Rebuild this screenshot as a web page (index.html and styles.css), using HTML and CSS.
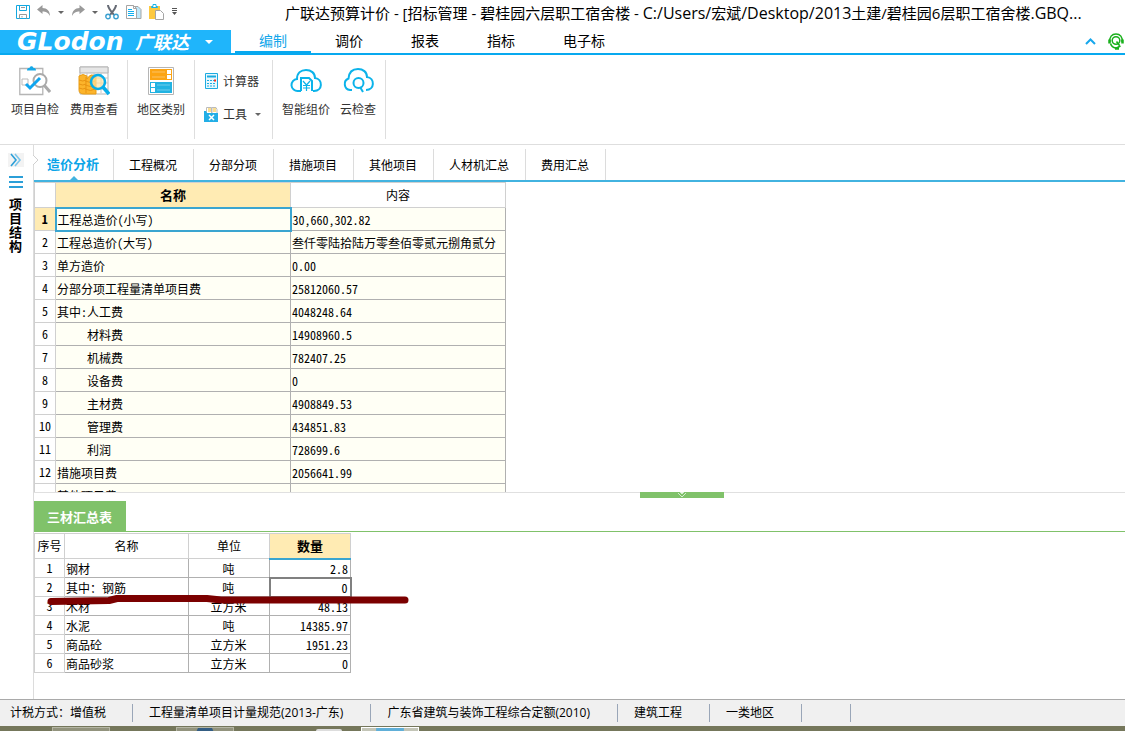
FILE: index.html
```html
<!DOCTYPE html>
<html lang="zh-CN">
<head>
<meta charset="utf-8">
<title>广联达预算计价</title>
<link rel="stylesheet" href="styles.css">
</head>
<body>
<div class="app">
  <header class="titlebar">
    <div class="quick">
      <button class="q" aria-label="保存"><svg width="14" height="14" viewBox="0 0 14 14" fill="none" stroke="#14a8e0"><path d="M.5.5h13v13H.5z"/><path d="M3.500 .5v5h7v-5" /><path d="M5 2.500h4" stroke="#999"/><path d="M3.500 13.500v-4h7v4M6 11v1.500" stroke="#999"/></svg></button>
      <button class="q" aria-label="撤销"><svg width="14" height="14" viewBox="0 0 14 14" fill="#9a9a9a"><path d="M0 4.500 5.500 0v3C10 3 13 6 13 11c-2-3.500-4-4.500-7.500-4.500V9z"/></svg></button>
      <i class="caret"></i>
      <button class="q" aria-label="重做"><svg width="14" height="14" viewBox="0 0 14 14" fill="#9a9a9a"><path d="M14 4.500 8.500 0v3C4 3 1 6 1 11c2-3.500 4-4.500 7.500-4.500V9z"/></svg></button>
      <i class="caret"></i>
      <button class="q" aria-label="剪切"><svg width="14" height="16" viewBox="0 0 14 16" fill="none"><path d="M3 1c0 3 2 5 6 10M11 1c0 3-2 5-6 10" stroke="#666b75" stroke-width="2"/><circle cx="3" cy="12.500" r="2.200" stroke="#3a9fd0" stroke-width="1.400"/><circle cx="11" cy="12.500" r="2.200" stroke="#3a9fd0" stroke-width="1.400"/></svg></button>
      <button class="q" aria-label="复制"><svg width="16" height="16" viewBox="0 0 16 16" fill="#fff" stroke="#a5a5a5"><path d="M8 2.500h4l3 3v9H8z" fill="#bfe8fb"/><path d="M.5 1.500h7l3 3v10H.5z"/><path d="M7.500 1.500v3h3" fill="none"/><path d="M2 5.500h4M2 7.500h6M2 9.500h6M2 11.500h6" stroke="#12b0f0"/></svg></button>
      <button class="q" aria-label="粘贴"><svg width="16" height="16" viewBox="0 0 16 16"><path d="M0 2h11v13H0z" fill="#fdc940"/><path d="M2.500 3.500v-1h1.500v-2h3v2h1.500v1z" fill="#fff" stroke="#18b3e8"/><path d="M6.500 6.500h5l3 3v6h-8z" fill="#fff" stroke="#a5a5a5"/></svg></button>
      <button class="q" aria-label="自定义"><svg width="5" height="8" viewBox="0 0 5 8" fill="#555"><path d="M0 0h5v1H0zM0 2h5v1H0zM0 4h5L2.500 7z"/></svg></button>
    </div>
    <h1 class="title">广联达预算计价 - [招标管理 - 碧桂园六层职工宿舍楼 - <span class="path">C:/Users/</span>宏斌<span class="path">/Desktop/2013</span>土建/碧桂园6层职工宿舍楼<span class="path">.GBQ...</span></h1>
  </header>

  <nav class="menubar">
    <button class="brand"><span class="brand-latin">GLodon</span><span class="brand-cn">广联达</span><i class="caret light"></i></button>
    <div class="menus">
      <button class="menu on">编制</button><button class="menu">调价</button><button class="menu">报表</button><button class="menu">指标</button><button class="menu">电子标</button>
    </div>
    <div class="menu-tools">
      <button class="q" aria-label="收起"><svg width="11" height="7" viewBox="0 0 11 7" fill="none" stroke="#17a7ec" stroke-width="2"><path d="M1 6 5.500 1.500 10 6"/></svg></button>
      <button class="q" aria-label="客服"><svg width="16" height="17" viewBox="0 0 16 17" fill="none" stroke="#19b01c"><path d="M2 9C1 4 4 1 8 1s7 3 6 8" stroke-width="1.500"/><circle cx="8" cy="7.500" r="3.800" stroke-width="1.500"/><path d="M1.500 6.500v4M14.500 6.500v4" stroke-width="2.500"/><path d="M8.500 8.500l3 4M2.500 10.500c1 3 3 4.500 6 4.500l4-2" stroke-width="1.600"/><path d="M7 15.500h4" stroke-width="2.500"/></svg></button>
    </div>
  </nav>

  <section class="ribbon">
    <div class="group">
      <button class="tool"><svg width="32" height="32" viewBox="0 0 32 32" fill="none"><path d="M.8 3.500h23v26H.8z" stroke="#b5b5b5" stroke-width="1.300" fill="#fff"/><path d="M8 5.500h9c0-2-1-2.500-2.500-2.500C14 .5 11 .5 10.500 3 9 3 8 3.500 8 5.500z" fill="#16a9e8"/><path d="M3 14h6v6H3z" stroke="#bbb"/><circle cx="21" cy="15.500" r="6.500" fill="#fff" stroke="#aaa" stroke-width="2"/><path d="M7 19l4 4 10-10" stroke="#0ea5ef" stroke-width="3"/><path d="M25 20l6 7" stroke="#aaa" stroke-width="3"/></svg>项目自检</button>
      <button class="tool"><svg width="32" height="32" viewBox="0 0 32 32" fill="none"><path d="M2 2h28v27H2z" fill="#fff" stroke="#b5b5b5"/><path d="M2 2h28v6H2z" fill="#e6e6e6" stroke="#b5b5b5"/><path d="M2 13h28M2 18h28M2 24h28M9 8v20M16 8v20M23 8v20" stroke="#c6c6c6"/><path d="M1 11q4-3 8 0v3q4-7 9-2v17H6q-5 0-5-4z" fill="#fcb42b" stroke="#e99d14"/><path d="M1 15q4 2 7 0M1 19q4 2 7 0M1 23q4 2 7 0M7 16q6 3 10 0M7 20q6 3 10 0M7 24q6 3 10 0M8 12v16" stroke="#e99412"/><circle cx="20" cy="17" r="7" fill="#ffe2a2" fill-opacity=".7" stroke="#08aeea" stroke-width="2.500"/><path d="M25 22l6 7" stroke="#08aeea" stroke-width="3.500"/></svg>费用查看</button>
    </div>
    <div class="group">
      <button class="tool"><svg width="32" height="32" viewBox="0 0 32 32" fill="none"><path d="M3.500 2.500h25v27h-25z" fill="#fff" stroke="#b5b5b5"/><path d="M5 4h22v11H5z" fill="#fca413"/><path d="M5 17h22v11H5z" fill="#22b3e2"/><path d="M7 7h13M7 12h13M12 20h13M12 25h13" stroke="#fff" stroke-opacity=".35"/><path d="M22 5h4v4h-4zM22 10h4v4h-4zM6 18h4v4H6zM6 23h4v4H6z" fill="#fff"/></svg>地区类别</button>
    </div>
    <div class="group stack">
      <button class="line-tool"><svg width="15" height="16" viewBox="0 0 15 16" fill="none" stroke="#1cabe0"><path d="M1.500.5h12v15h-12z" fill="#e7f7fd"/><path d="M3 3.500h9" stroke-width="2"/><path d="M3 7.500h9M3 10.500h9M3 13h9" stroke-dasharray="2 1"/><path d="M10 7.500h2" stroke="#f03020" stroke-width="2"/></svg>计算器</button>
      <button class="line-tool"><svg width="15" height="16" viewBox="0 0 15 16" fill="none"><path d="M2.500 1.500h5v6h-5zM8 1.500h4l1 2v4H8z" fill="#fff" stroke="#bbb"/><path d="M4 3h3M4 5h3M9 3h3M9 5h3" stroke="#f4bd23"/><path d="M0 5h2l1 2h11v9H0z" fill="#22aee6"/><path d="M5 9l5 5M10 9l-5 5" stroke="#fff" stroke-width="1.500"/></svg>工具<i class="caret"></i></button>
    </div>
    <div class="group cloud">
      <button class="tool"><svg width="32" height="32" viewBox="0 0 32 32" fill="none" stroke="#0bb3ea" stroke-width="2"><path d="M11 26H8a6 6 0 0 1-1-12C7 8 11 5 16 5s9 3 9 8c8 1 8 13-1 13h-1M11 26V13h8l3 3v10"/><path d="M13 16l3.500 4 3.500-4M16.500 20v6M13 20.500h7M13 23h7" stroke-width="1.200"/></svg>智能组价</button>
      <button class="tool"><svg width="32" height="32" viewBox="0 0 32 32" fill="none" stroke="#0bb3ea" stroke-width="2"><path d="M10 25H8A6 6 0 0 1 6.500 13.500C7 7 11 4 16 4s9 3 9 8c8 1 8 13-1 13"/><circle cx="16.500" cy="18" r="5"/><path d="M18 22l3 5"/></svg>云检查</button>
    </div>
  </section>

  <main class="workspace">
    <aside class="rail">
      <button class="q" aria-label="展开"><svg width="16" height="14" viewBox="0 0 16 14" fill="none" stroke="#2b9fd8" stroke-width="1.600"><rect width="16" height="14" fill="#f3f3f3" stroke="none"/><path d="M3 1l5 6-5 6"/><path d="M7 1l5 6-5 6" stroke="#7cc6ea"/></svg></button>
      <button class="q" aria-label="菜单"><svg width="14" height="12" viewBox="0 0 14 12" fill="#2b9fd8"><path d="M0 0h14v2H0zM0 5h14v2H0zM0 10h14v2H0z"/></svg></button>
      <span class="rail-text">项目结构</span>
    </aside>
    <div class="content">
      <nav class="tabs">
        <button class="tab on">造价分析</button><button class="tab">工程概况</button><button class="tab">分部分项</button><button class="tab">措施项目</button><button class="tab">其他项目</button><button class="tab">人材机汇总</button><button class="tab">费用汇总</button>
        <svg class="notch" width="6" height="12" viewBox="0 0 6 12" fill="#fff" stroke="#d0d0d0"><path d="M0 1l5 5-5 5"/></svg>
      </nav>
      <div class="upper">
        <table class="grid cost">
          <colgroup><col class="c-no"><col class="c-name"><col class="c-value"></colgroup>
          <thead><tr><th></th><th class="hot">名称</th><th>内容</th></tr></thead>
          <tbody>
            <tr class="current"><th>1</th><td class="picked">工程总造价(小写)</td><td>30,660,302.82</td></tr>
            <tr><th>2</th><td>工程总造价(大写)</td><td>叁仟零陆拾陆万零叁佰零贰元捌角贰分</td></tr>
            <tr><th>3</th><td>单方造价</td><td>0.00</td></tr>
            <tr><th>4</th><td>分部分项工程量清单项目费</td><td>25812060.57</td></tr>
            <tr><th>5</th><td>其中:人工费</td><td>4048248.64</td></tr>
            <tr><th>6</th><td class="sub">材料费</td><td>14908960.5</td></tr>
            <tr><th>7</th><td class="sub">机械费</td><td>782407.25</td></tr>
            <tr><th>8</th><td class="sub">设备费</td><td>0</td></tr>
            <tr><th>9</th><td class="sub">主材费</td><td>4908849.53</td></tr>
            <tr><th>10</th><td class="sub">管理费</td><td>434851.83</td></tr>
            <tr><th>11</th><td class="sub">利润</td><td>728699.6</td></tr>
            <tr><th>12</th><td>措施项目费</td><td>2056641.99</td></tr>
            <tr><th></th><td>其他项目费</td><td></td></tr>
          </tbody>
        </table>
      </div>
      <div class="splitter"><button class="handle" aria-label="折叠"><svg width="10" height="6" viewBox="0 0 10 6" fill="none" stroke="#d5ecd0"><path d="M3 0h4L5 2z" fill="#fff"/><path d="M1 1l4 4 4-4"/></svg></button></div>
      <div class="subtabs"><button class="subtab">三材汇总表</button></div>
      <div class="lower">
        <table class="grid material">
          <colgroup><col class="m-no"><col class="m-name"><col class="m-unit"><col class="m-qty"></colgroup>
          <thead><tr><th>序号</th><th>名称</th><th>单位</th><th class="hot">数量</th></tr></thead>
          <tbody>
            <tr><th>1</th><td>钢材</td><td>吨</td><td>2.8</td></tr>
            <tr><th>2</th><td>其中：钢筋</td><td>吨</td><td class="focus">0</td></tr>
            <tr><th>3</th><td>木材</td><td>立方米</td><td>48.13</td></tr>
            <tr><th>4</th><td>水泥</td><td>吨</td><td>14385.97</td></tr>
            <tr><th>5</th><td>商品砼</td><td>立方米</td><td>1951.23</td></tr>
            <tr><th>6</th><td>商品砂浆</td><td>立方米</td><td>0</td></tr>
          </tbody>
        </table>
        <svg class="marker" width="364" height="12" viewBox="0 0 364 12" fill="none" stroke="#7b0000" stroke-width="7" stroke-linecap="round" stroke-linejoin="round"><path d="M4 7.500 62 6.500l8-2h90l14 1.500h184"/></svg>
      </div>
    </div>
  </main>

  <footer class="status">
    <span>计税方式：增值税</span><span>工程量清单项目计量规范(2013-广东)</span><span>广东省建筑与装饰工程综合定额(2010)</span><span>建筑工程</span><span>一类地区</span><span class="blank"></span>
  </footer>
  <div class="taskbar"><i class="task"></i><i class="task blue"></i><i class="orb"></i><i class="task active"></i></div>
</div>
</body>
</html>
```
FILE: styles.css
```css
* { box-sizing: border-box; }
body { margin: 0; background: #fff; color: #000; font: 12px/16px "Noto Sans CJK SC", sans-serif; }
button { margin: 0; padding: 0; border: 0; background: none; color: inherit; font: inherit; }
svg { display: block; flex: none; }
.app { display: flex; flex-direction: column; height: 100vh; overflow: hidden; }
.caret { display: block; flex: none; width: 0; height: 0; border: 3px solid transparent; border-top-color: #666; border-bottom: 0; }
.caret.light { border-width: 4px; border-top-color: #fff; border-bottom: 0; }

.titlebar { display: flex; align-items: center; height: 30px; flex: none; padding: 0 0 6px 16px; }
.quick { display: flex; align-items: center; gap: 7px; width: 269px; height: 24px; flex: none; }
.title { margin: 0; padding-top: 2px; font-family: "Open Sans", "Noto Sans CJK SC", sans-serif; font-size: 15px; line-height: 24px; font-weight: 400; white-space: nowrap; overflow: hidden; }
.path { font-size: 16px; }

.menubar { display: flex; height: 25px; flex: none; border-bottom: 2px solid #08a9ef; }
.brand { display: flex; align-items: center; width: 231px; flex: none; padding-left: 17px; background: #1fb5fb; color: #fff; font-weight: 700; font-style: italic; line-height: 23px; }
.brand-latin { width: 118px; text-align: left; font-family: "DejaVu Sans", sans-serif; font-size: 25px; }
.brand-cn { width: 70px; text-align: left; font-size: 18px; }
.menus { display: flex; margin-left: 4px; }
.menu { padding: 0 24px 2px; font-size: 14px; line-height: 18px; border-bottom: 2px solid transparent; }
.menu.on { color: #12a6ea; border-color: #08a9ef; }
.menu-tools { display: flex; align-items: center; gap: 12px; margin-left: auto; padding-right: 1px; }

.ribbon { display: flex; height: 90px; flex: none; padding: 5px 0; border-bottom: 1px solid #dedede; color: #333; }
.group { display: flex; align-items: flex-start; gap: 11px; padding: 5px 9px; border-right: 1px solid #dedede; }
.group:first-child { padding-left: 11px; }
.group.cloud { gap: 10px; }
.tool { display: flex; flex-direction: column; align-items: center; gap: 4px; }
.group.stack { flex-direction: column; gap: 17px; padding: 13px 11px 0 9px; }
.line-tool { display: flex; align-items: center; gap: 4px; }
.line-tool .caret { margin-left: 4px; }

.workspace { display: flex; flex: 1; min-height: 0; }
.rail { display: flex; flex-direction: column; align-items: center; gap: 9px; width: 34px; flex: none; padding: 8px 2px 0 0; border-right: 1px solid #dcdcdc; }
.rail-text { width: 13px; font-size: 13px; line-height: 14px; font-weight: 700; }
.content { flex: 1; min-width: 0; display: flex; flex-direction: column; }
.tabs { position: relative; display: flex; height: 37px; flex: none; padding-top: 4px; border-bottom: 2px solid #42b3e0; }
.tab { padding: 0 16px 0 15px; border-right: 1px solid #dcdcdc; }
.tab.on { padding: 0 14px 2px 13px; position: relative; color: #0ba5e8; font-size: 13px; font-weight: 700; }
.tab.on::after { content: ""; position: absolute; left: 50%; bottom: 0; border: 4px solid transparent; border-bottom-color: #42b3e0; border-top: 0; transform: translateX(-50%); }
.notch { position: absolute; left: -1px; top: 9px; }

.grid { border-collapse: collapse; table-layout: fixed; line-height: 16px; font-feature-settings: "hwid"; }
.grid th, .grid td { padding: 1px 2px 0 1px; border: 1px solid #b0b0b0; overflow: hidden; white-space: nowrap; text-align: left; font-weight: 400; }
.grid th { padding: 0; border-color: #d0d0d0; text-align: center; }
.grid th.hot { background: #ffebb3; font-size: 13px; font-weight: 700; border-bottom: 2px solid #3aa5d0; }
.grid thead tr { height: 25px; }
.upper { flex: 1; min-height: 0; overflow: hidden; }
.cost { width: 472px; }
.c-no { width: 21px; }
.c-name { width: 235px; }
.c-value { width: 215px; }
.cost tbody tr { height: 23px; }
.cost td { background: #fffff5; }
.cost .current th { background: #ffebb3; font-weight: 700; }
.cost td.picked { border: 2px solid #3aa5d0; }
.cost td.sub { padding-left: 31px; }

.splitter { height: 9px; flex: none; border-top: 1px solid #e0e0e0; }
.handle { display: flex; justify-content: center; width: 84px; height: 6px; margin: -1px 0 0 55.5%; background: #80c26a; }
.subtabs { display: flex; flex: none; height: 31px; border-bottom: 1px solid #80c26a; }
.subtab { padding: 2px 14px 0 13px; background: #80c26a; color: #fff; font-size: 13px; font-weight: 700; }
.lower { position: relative; flex: none; height: 167px; padding-top: 1px; }
.material { width: 317px; }
.m-no { width: 30px; }
.m-name { width: 124px; }
.m-unit { width: 81px; }
.m-qty { width: 81px; }
.material tbody tr { height: 19px; }
.material td:nth-child(3) { text-align: center; }
.material td:nth-child(4) { text-align: right; }
.material td.focus { border: 2px solid #808080; }
.marker { position: absolute; left: 13px; top: 62px; }

.status { display: flex; align-items: center; height: 27px; flex: none; background: #f0f0f0; border-top: 1px solid #a9a9a9; font-family: "Open Sans", "Noto Sans CJK SC", sans-serif; white-space: nowrap; }
.status span { height: 18px; line-height: 18px; padding: 0 27px 0 16px; border-right: 1px solid #9aa6b8; }
.status span:first-child { padding: 0 26px 0 10px; }
.status span.blank { width: 49px; padding: 0; }
.taskbar { display: flex; height: 5px; flex: none; padding-left: 52px; background: #75775b; }
.task { width: 58px; margin-right: 66px; margin-top: 1px; border: 1px solid #b5b6a4; border-bottom: 0; background: #92937d; }
.task.blue { margin-right: 82px; background: radial-gradient(circle at 50% 5px, #345d83 8px, #92937d 9px); }
.orb { width: 26px; margin: 3px 19px 0 0; border-radius: 8px 8px 0 0; background: #ddd; }
.task.active { border-color: #fff; background: linear-gradient(90deg, #c3c5b7 25%, #60afd8 26%, #60afd8 74%, #c3c5b7 75%); }
```
